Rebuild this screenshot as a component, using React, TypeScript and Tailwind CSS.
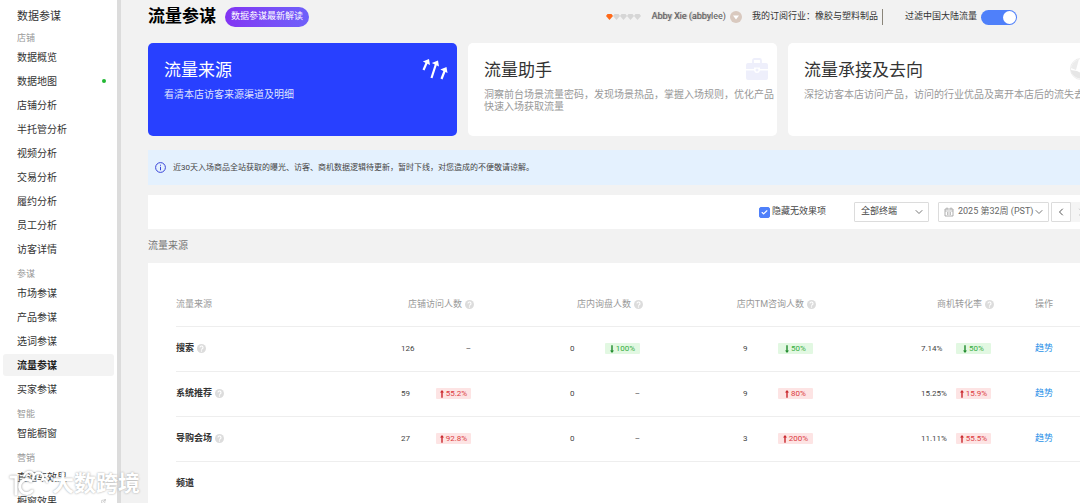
import React from "react";
import { Check, ChevronDown, ChevronLeft, ChevronRight, ExternalLink } from "lucide-react";

interface NavItem {
  name: string;
  active?: boolean;
  dot?: boolean;
  external?: boolean;
}

interface NavGroup {
  title: string;
  items: NavItem[];
}

interface Metric {
  value: string;
  trend?: "up" | "down";
  change?: string;
}

interface Row {
  name: string;
  help?: boolean;
  metrics: Metric[];
}

const groups: NavGroup[] = [
  {
    title: "店铺",
    items: [
      { name: "数据概览" },
      { name: "数据地图", dot: true },
      { name: "店铺分析" },
      { name: "半托管分析" },
      { name: "视频分析" },
      { name: "交易分析" },
      { name: "履约分析" },
      { name: "员工分析" },
      { name: "访客详情" },
    ],
  },
  {
    title: "参谋",
    items: [
      { name: "市场参谋" },
      { name: "产品参谋" },
      { name: "选词参谋" },
      { name: "流量参谋", active: true },
      { name: "买家参谋" },
    ],
  },
  { title: "智能", items: [{ name: "智能橱窗" }] },
  {
    title: "营销",
    items: [
      { name: "直通车效果", external: true },
      { name: "橱窗效果", external: true },
    ],
  },
];

const columns = ["店铺访问人数", "店内询盘人数", "店内TM咨询人数", "商机转化率"];

const rows: Row[] = [
  {
    name: "搜索",
    help: true,
    metrics: [
      { value: "126" },
      { value: "0", trend: "down", change: "100%" },
      { value: "9", trend: "down", change: "50%" },
      { value: "7.14%", trend: "down", change: "50%" },
    ],
  },
  {
    name: "系统推荐",
    help: true,
    metrics: [
      { value: "59", trend: "up", change: "55.2%" },
      { value: "0" },
      { value: "9", trend: "up", change: "80%" },
      { value: "15.25%", trend: "up", change: "15.9%" },
    ],
  },
  {
    name: "导购会场",
    help: true,
    metrics: [
      { value: "27", trend: "up", change: "92.8%" },
      { value: "0" },
      { value: "3", trend: "up", change: "200%" },
      { value: "11.11%", trend: "up", change: "55.5%" },
    ],
  },
  { name: "频道", metrics: [] },
];

const HelpIcon = () => (
  <svg viewBox="0 0 18 18" className="w-[9px] h-[9px] shrink-0" aria-hidden="true">
    <circle cx="9" cy="9" r="9" fill="#dcdcdc" />
    <path
      d="M6 7.2a3 3 0 1 1 4.600 2.400c-1 .6-1.600 1-1.600 2"
      fill="none"
      stroke="#fff"
      strokeWidth="2.200"
    />
    <circle cx="9" cy="14" r="1.400" fill="#fff" />
  </svg>
);

const TrendArrow = ({ trend }: { trend: "up" | "down" }) => (
  <svg viewBox="0 0 8 16" className="w-1 h-2 shrink-0" aria-hidden="true">
    {trend === "up" ? (
      <path d="M4 0 8 5H5.400v10.500H2.600V5H0z" fill="#c9262c" />
    ) : (
      <path d="M4 16 0 11h2.600V.5h2.800V11H8z" fill="#1f8a2b" />
    )}
  </svg>
);

const ArrowsIcon = () => (
  <svg viewBox="0 0 27 22" className="w-[27px] h-[22px]" aria-hidden="true">
    <path d="M2.500 12 6 4M10.500 20 15 6M20.500 21 24 12" stroke="#fff" strokeWidth="2.200" fill="none" />
    <path d="M8 1 1.800 3.600 9 7zM17 2.500l-6.200 2.600L18 8.500zM25.500 9l-6.200 2.600 7.200 3.400z" fill="#fff" />
  </svg>
);

const ToolboxIcon = () => (
  <svg viewBox="0 0 22 22" className="w-[22px] h-[22px]" aria-hidden="true">
    <path d="M7 6V2.500Q7 1 8.500 1h5Q15 1 15 2.500V6" fill="none" stroke="#eeeffb" strokeWidth="1.800" />
    <path d="M2 5h18q2 0 2 2v4h-8V9.500H8V11H0V7q0-2 2-2z" fill="#eeeffb" />
    <path d="M0 12.500h8q.5 2.500 3 2.500t3-2.500h8V20q0 2-2 2H2q-2 0-2-2z" fill="#eeeffb" />
    <circle cx="11" cy="12" r="1.500" fill="#eeeffb" />
  </svg>
);

const PieIcon = () => (
  <svg viewBox="0 0 18 22" className="w-[18px] h-[22px] overflow-visible" aria-hidden="true">
    <circle cx="11" cy="11" r="10.500" fill="#fff" stroke="#ededed" />
    <path d="M.5 12 7 13l4 2 10-2.500A10.500 10.500 0 0 1 .5 12z" fill="#e6e6e6" />
    <path d="M1 10Q2 4 9 1L6 12z" fill="#ececec" />
  </svg>
);

const CalendarIcon = () => (
  <svg viewBox="0 0 20 20" className="w-[10px] h-[10px] shrink-0" fill="none" stroke="#999" aria-hidden="true">
    <path d="M2 4h16v14H2zM6 1v4M14 1v4" strokeWidth="1.600" />
    <path d="M2 8h16M7 10v6M10 10v6M13 10v6" strokeWidth="1.200" />
  </svg>
);

const cards = [
  { title: "流量来源", desc: "看清本店访客来源渠道及明细", icon: <ArrowsIcon />, active: true },
  {
    title: "流量助手",
    desc: "洞察前台场景流量密码，发现场景热品，掌握入场规则，优化产品快速入场获取流量",
    icon: <ToolboxIcon />,
  },
  {
    title: "流量承接及去向",
    desc: "深挖访客本店访问产品，访问的行业优品及离开本店后的流失去向",
    icon: <PieIcon />,
  },
];

const Sidebar = () => (
  <nav className="w-[121px] shrink-0 bg-white border-r-4 border-[#dcdcdc] px-[3px] text-[#333]">
    <h2 className="pt-[9px] pl-[14px] text-[11px] leading-4">数据参谋</h2>
    {groups.map((group) => (
      <div key={group.title}>
        <h3 className="h-5 pt-[5px] pl-[14px] text-[9px] leading-4 text-[#999]">{group.title}</h3>
        <ul>
          {group.items.map((item) => (
            <li key={item.name} className="h-6 py-px">
              <a
                href="#"
                className={`flex items-center justify-between h-[22px] pl-[14px] pr-2 rounded-[3px] text-[10px] ${
                  item.active ? "bg-[#f3f3f3] font-bold text-[#222]" : ""
                }`}
              >
                {item.name}
                {item.dot && <span className="w-1 h-1 rounded-full bg-[#22b833]" />}
                {item.external && <ExternalLink className="w-[5px] h-[5px] text-[#999]" />}
              </a>
            </li>
          ))}
        </ul>
      </div>
    ))}
  </nav>
);

const Header = () => (
  <header className="flex items-center h-[34px] text-[9px] text-[#333]">
    <h1 className="text-[17px] font-bold text-black">流量参谋</h1>
    <button className="h-5 px-[6px] ml-[9px] rounded-full bg-linear-to-r from-[#8233f3] to-[#6e60fa] text-white">
      数据参谋最新解读
    </button>
    <div className="flex items-center ml-auto mr-[80px]">
      <svg viewBox="0 0 36 6" className="w-9 h-[6px]" aria-hidden="true">
        {[0, 7, 14, 21, 28].map((x) => (
          <path
            key={x}
            d={`M${x + 1.500} 0h4l1.500 2-3.500 4L${x} 2z`}
            fill={x === 0 ? "#ff6a1a" : "#d6d6d6"}
          />
        ))}
      </svg>
      <span className="ml-[10px] text-[#555]">
        <span className="[text-shadow:1px_0_1px_#999]">Abby Xie (abby</span>lee)
      </span>
      <svg viewBox="0 0 12 12" className="w-3 h-3 ml-1" aria-hidden="true">
        <circle cx="6" cy="6" r="6" fill="#d9c9bf" />
        <path d="M3 4.500h6L6 8.500z" fill="#fff" />
      </svg>
      <span className="ml-[10px]">我的订阅行业：橡胶与塑料制品</span>
      <span className="w-px h-4 ml-1 bg-[#8a857a]" />
      <label htmlFor="mainland" className="ml-[22px]">
        过滤中国大陆流量
      </label>
      <span className="relative flex ml-1">
        <input
          id="mainland"
          type="checkbox"
          role="switch"
          defaultChecked
          className="peer appearance-none w-9 h-[15px] rounded-full bg-[#ccc] checked:bg-[#4f80fa]"
        />
        <span className="absolute top-px left-px peer-checked:left-[22px] w-[13px] h-[13px] rounded-full bg-white pointer-events-none" />
      </span>
    </div>
  </header>
);

const Filters = () => (
  <div className="flex items-center justify-end h-[34px] mt-[10px] bg-white text-[9px] text-[#444]">
    <label className="flex items-center gap-[2px] mr-7">
      <span className="relative flex">
        <input
          type="checkbox"
          defaultChecked
          className="appearance-none w-[11px] h-[11px] rounded-[2px] border border-[#4f80fa] checked:bg-[#4f80fa]"
        />
        <Check className="absolute inset-[2px] w-[7px] h-[7px] text-white pointer-events-none" strokeWidth={4} />
      </span>
      隐藏无效果项
    </label>
    <div className="relative">
      <select
        aria-label="终端"
        className="appearance-none block w-[75px] h-5 pl-[6px] border border-[#dcdcdc] rounded-[1px] bg-white"
      >
        <option>全部终端</option>
      </select>
      <ChevronDown className="absolute right-1 top-1 w-3 h-3 text-[#777]" strokeWidth={2} />
    </div>
    <button className="flex items-center w-[111px] h-5 ml-[9px] px-[5px] border border-[#dcdcdc] rounded-[1px] text-[#666] whitespace-nowrap">
      <CalendarIcon />
      <span className="ml-1">2025 第32周 (PST)</span>
      <ChevronDown className="w-3 h-3 ml-auto shrink-0 text-[#777]" strokeWidth={2} />
    </button>
    <div className="flex h-5 ml-[2px] mr-[6px]">
      <button aria-label="上一周" className="flex items-center justify-center w-5 border border-[#dcdcdc] rounded-l-[1px]">
        <ChevronLeft className="w-3 h-3 text-[#555]" strokeWidth={2} />
      </button>
      <button aria-label="下一周" disabled className="flex items-center justify-center w-5 bg-[#f5f5f5]">
        <ChevronRight className="w-3 h-3 text-[#bbb]" strokeWidth={2} />
      </button>
    </div>
  </div>
);

const MetricCell = ({ metric }: { metric: Metric }) => (
  <div className="flex items-center justify-between w-[70px] ml-auto mr-[3px] text-[8px] leading-[11px] text-[#444]">
    <span>{metric.value}</span>
    {metric.trend ? (
      <span
        className={`flex items-center justify-center gap-[2px] w-[35px] h-[11px] rounded-[1px] ${
          metric.trend === "up" ? "bg-[#fde4e4] text-[#dc3a40]" : "bg-[#e2f8e2] text-[#35ad3f]"
        }`}
      >
        <TrendArrow trend={metric.trend} />
        {metric.change}
      </span>
    ) : (
      <span>–</span>
    )}
  </div>
);

const SourceTable = () => (
  <div className="pl-7 bg-white">
    <table className="w-full table-fixed text-left text-[9px]">
      <colgroup>
        <col className="w-[129px]" />
        <col className="w-[169px]" />
        <col className="w-[169px]" />
        <col className="w-[173px]" />
        <col className="w-[178px]" />
        <col />
      </colgroup>
      <thead className="text-[#999]">
        <tr className="h-[63px] border-b border-[#eee]">
          <th className="pt-5 font-normal">流量来源</th>
          {columns.map((column) => (
            <th key={column} className="pt-5 font-normal whitespace-nowrap">
              <span className="flex items-center justify-end gap-[3px]">
                {column}
                <HelpIcon />
              </span>
            </th>
          ))}
          <th className="pt-5 pl-[41px] font-normal">操作</th>
        </tr>
      </thead>
      <tbody>
        {rows.map((row) => (
          <tr key={row.name} className="h-[45px] border-b border-[#eee]">
            <th className="font-bold text-[#333]">
              <span className="flex items-center gap-[3px]">
                {row.name}
                {row.help && <HelpIcon />}
              </span>
            </th>
            {columns.map((column, i) => (
              <td key={column}>{row.metrics[i] && <MetricCell metric={row.metrics[i]} />}</td>
            ))}
            <td className="pl-[41px]">
              {row.metrics.length > 0 && (
                <a href="#" className="text-[#2a91e8]">
                  趋势
                </a>
              )}
            </td>
          </tr>
        ))}
      </tbody>
    </table>
  </div>
);

const Watermark = () => (
  <div className="absolute left-[9px] bottom-[5px] flex items-center gap-1 pointer-events-none">
    <svg
      viewBox="0 0 39 28"
      className="w-[39px] h-7 drop-shadow-[0_0_1px_#999]"
      fill="none"
      stroke="#fff"
      strokeWidth="3"
      strokeLinecap="round"
      strokeLinejoin="round"
      aria-hidden="true"
    >
      <path d="M2 7h5v17" />
      <path d="M22 11a7 7 0 1 0 1 10" />
      <path d="M15 6q2-5 7-4 4 2 2 7 1-7 7-6 5 2 2 7 4-2 5 2" strokeWidth="2" />
    </svg>
    <span className="text-[22px] leading-7 font-bold text-white [text-shadow:0_0_2px_#999]">
      大数跨境
    </span>
  </div>
);

const App: React.FC = () => {
  return (
    <div className="relative flex h-screen overflow-hidden bg-[#f2f2f2] font-[Roboto,'Noto_Sans_CJK_SC',sans-serif]">
      <Sidebar />
      <main className="flex-1 min-w-[976px] pl-[27px]">
        <Header />
        <div className="grid grid-cols-3 gap-[11px] mt-[9px]">
          {cards.map((card) => (
            <a
              key={card.title}
              href="#"
              className={`relative block h-[93px] pt-[17px] pl-4 rounded-[5px] ${
                card.active ? "bg-[#2840ff] text-white" : "bg-white text-[#333]"
              }`}
            >
              <h2 className="text-[17px] leading-5">{card.title}</h2>
              <p className={`mt-[9px] text-[10px] leading-3 ${card.active ? "text-[#dfe3ff]" : "text-[#999]"}`}>
                {card.desc}
              </p>
              <span className="absolute top-[15px] right-[9px]">{card.icon}</span>
            </a>
          ))}
        </div>
        <div className="flex items-center gap-[7px] h-[35px] mt-[14px] pl-[7px] bg-[#e4f1fe] text-[8px] text-[#444]">
          <svg viewBox="0 0 22 22" className="w-[11px] h-[11px]" aria-hidden="true">
            <circle cx="11" cy="11" r="9.800" fill="none" stroke="#3a45d8" strokeWidth="2" />
            <path d="M11 9.500v7M11 5.500v2" stroke="#3a45d8" strokeWidth="2" />
          </svg>
          近30天入场商品全站获取的曝光、访客、商机数据逻辑待更新，暂时下线，对您造成的不便敬请谅解。
        </div>
        <Filters />
        <h3 className="text-[10px] leading-[34px] text-[#777]">流量来源</h3>
        <SourceTable />
      </main>
      <Watermark />
    </div>
  );
};

export default App;
